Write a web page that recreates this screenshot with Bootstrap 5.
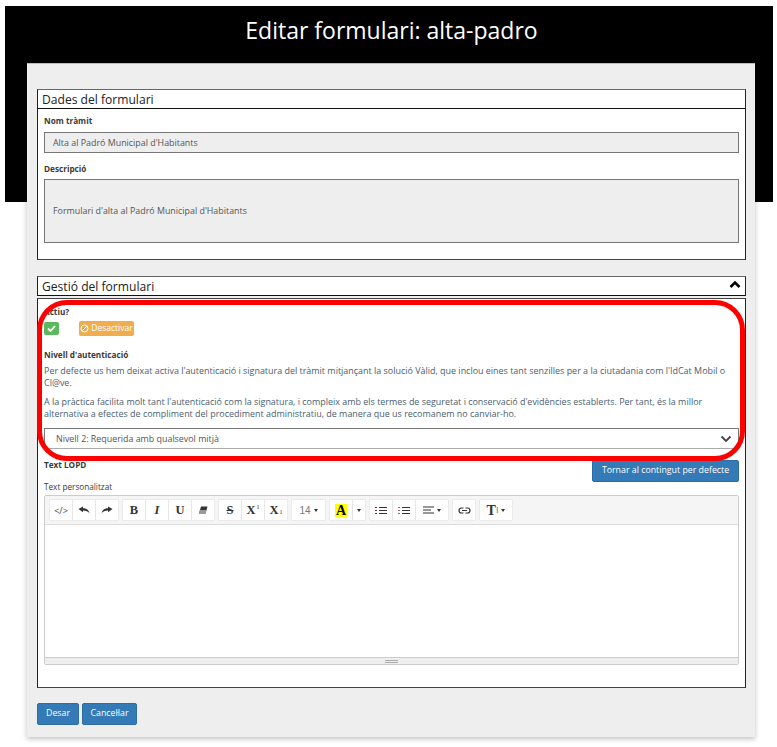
<!DOCTYPE html>
<html lang="ca">
<head>
<meta charset="utf-8">
<title>Editar formulari</title>
<link href="https://cdn.jsdelivr.net/npm/bootstrap@5.3.0/dist/css/bootstrap.min.css" rel="stylesheet">
<style>
html,body{margin:0;height:747px;overflow:hidden;background:#fff}
body{font-family:"Open Sans","Noto Sans",sans-serif;font-size:8.9px;color:#333;position:relative}
.hero{margin:6px 4px 0 5px;height:196px;background:#000;color:#fff;text-align:center;font-size:23px;line-height:48px;padding-left:5px}
.sheet{position:absolute;left:27px;top:63px;width:728px;height:674px;background:#eee;box-shadow:0 2px 5px rgba(0,0,0,.25);border-top:1px solid #bbb;padding:25px 9px 0 10px;box-sizing:border-box}
.sec-head{height:20px;background:#fff;border:1px solid #222;border-color:#666 #222 #111 #222;font-size:12.1px;line-height:19px;padding-left:4px;color:#222;position:relative}
.sec-body{background:#fff;border:1px solid #222;border-top:0;border-bottom-color:#444;padding:0 6px}
.s1{height:151px;padding-top:6px}
.s2{height:390px;margin-top:2px;border-top:1px solid #444;padding-top:7px;position:relative}
.lab{font-weight:700;font-size:8.2px;line-height:12px;color:#3a3a3a;margin:0}
.lab-gap{margin-top:10px}
.fld{background:#eee;border:1px solid #777;color:#555;padding:0 8px;display:flex;align-items:center;font-size:8.9px}
.f1{height:21px;margin-top:5px}
.f2{height:64px;margin-top:4px}
.state-row{margin-top:3px}
.tick{width:15px;height:13px;background:#5cb85c;border-radius:2px;display:flex;align-items:center;justify-content:center}
.deact{margin-left:20px;width:55px;height:15px;background:#f0ad4e;border-radius:2px;color:#fff;font-size:8.5px;display:flex;align-items:center;justify-content:center;gap:2px}
.para{margin:0;font-size:8.95px;line-height:12px;color:#4a6070}
.selbox{height:21px;border:1px solid #777;border-bottom-color:#aaa;background:#fff;margin-top:8px;padding:0 6px 0 11px;display:flex;align-items:center;justify-content:space-between;color:#555;font-size:8.9px}
.redring{position:absolute;left:37px;top:300px;width:708px;height:161px;border:5px solid #f00;border-radius:30px;pointer-events:none;box-sizing:border-box}
.btn-pad{--bs-btn-bg:#337ab7;--bs-btn-border-color:#2e6da4;--bs-btn-color:#fff;--bs-btn-hover-bg:#337ab7;--bs-btn-hover-color:#fff;--bs-btn-padding-y:0;--bs-btn-padding-x:0;--bs-btn-font-size:8.8px;--bs-btn-border-radius:2px;height:22px;display:inline-flex;align-items:center;justify-content:center}
.lopd-row{height:21px;margin-top:11px}
.lopd-txt{margin-top:-1px}
.ret{width:147px}
.ed{border:1px solid #ccc;margin-top:2px;height:170px;display:flex;flex-direction:column;border-radius:2px}
.tb{height:29px;background:#f5f5f5;border-bottom:1px solid #ddd;padding:4px 5px;display:flex;gap:5px}
.tg{display:flex;height:20px;gap:1px}
.tk{height:20px;min-width:22px;background:#fff;box-shadow:0 0 0 .5px #e2e2e2;display:flex;align-items:center;justify-content:center;color:#333;font-size:12.500px;font-family:"Liberation Serif",serif;font-weight:700;gap:3px;padding:0 3px}
.tk svg{display:block}
.tk-code{font:400 9px "Open Sans",sans-serif;color:#444}
.tk-size{min-width:33px;font:400 10px "Liberation Sans",sans-serif;color:#777}
.tk-marker{background:#ff0;color:#000;padding:0 1px;font-size:14px;line-height:13px}
.tk-narrow{min-width:12px;padding:0}
.tk-wide{min-width:32px}
.tk-t{width:32px;font-size:14px;padding:0}
.tk-tsmall{font:400 9px "Liberation Sans",sans-serif;color:#777;margin-left:-3px}
.caret-mark{width:0;height:0;border-left:2.500px solid transparent;border-right:2.500px solid transparent;border-top:3px solid #333}
.ed-area{flex:1;background:#fff}
.ed-foot{height:7px;background:#eee;border-top:1px solid #ccc;display:flex;align-items:center;justify-content:center;flex-direction:column;gap:1px}
.ed-foot i{display:block;width:13px;height:1px;background:#aaa}
.foot{margin-top:15px;display:flex;gap:3px}
.foot-a{width:42px}
.foot-b{width:55px}
.tk sup,.tk sub{font-size:6px;font-weight:400;margin-left:-2px}
.chev{right:4px;top:3px}
.mt-13{margin-top:13px}
.mt-4p{margin-top:4px}
.mt-7p{margin-top:7px}
</style>
</head>
<body>
<div class="hero">Editar formulari: alta-padro</div>
<div class="sheet">
  <div class="sec-head">Dades del formulari</div>
  <div class="sec-body s1">
    <p class="lab">Nom tràmit</p>
    <div class="fld f1">Alta al Padró Municipal d'Habitants</div>
    <p class="lab lab-gap">Descripció</p>
    <div class="fld f2">Formulari d'alta al Padró Municipal d'Habitants</div>
  </div>
  <div class="sec-head mt-3">Gestió del formulari
    <svg class="position-absolute chev" width="12" height="9" viewBox="0 0 12 9"><path d="M1.500 7 6 2.500 10.500 7" fill="none" stroke="#000" stroke-width="2.600"/></svg>
  </div>
  <div class="sec-body s2">
    <p class="lab">Actiu?</p>
    <div class="d-flex align-items-center state-row">
      <div class="tick"><svg width="9" height="7" viewBox="0 0 9 7"><path d="M1 3.500 3.500 6 8 1" fill="none" stroke="#fff" stroke-width="1.800"/></svg></div>
      <div class="deact"><svg width="9" height="9" viewBox="0 0 9 9"><circle cx="4.500" cy="4.500" r="3.500" fill="none" stroke="#fff" stroke-width="1"/><path d="M2 7 7 2" stroke="#fff" stroke-width="1"/></svg>Desactivar</div>
    </div>
    <p class="lab mt-13">Nivell d'autenticació</p>
    <p class="para mt-4p">Per defecte us hem deixat activa l'autenticació i signatura del tràmit mitjançant la solució Vàlid, que inclou eines tant senzilles per a la ciutadania com l'IdCat Mobil o Cl@ve.</p>
    <p class="para mt-7p">A la pràctica facilita molt tant l'autenticació com la signatura, i compleix amb els termes de seguretat i conservació d'evidències establerts. Per tant, és la millor alternativa a efectes de compliment del procediment administratiu, de manera que us recomanem no canviar-ho.</p>
    <div class="selbox"><span>Nivell 2: Requerida amb qualsevol mitjà</span><svg width="12" height="8" viewBox="0 0 12 8"><path d="M1.500 1.500 6 6 10.500 1.500" fill="none" stroke="#444" stroke-width="1.800"/></svg></div>
    <div class="d-flex justify-content-between align-items-start lopd-row">
      <p class="lab lopd-txt">Text LOPD</p>
      <button class="btn btn-pad ret" type="button">Tornar al contingut per defecte</button>
    </div>
    <p class="lab fw-normal">Text personalitzat</p>
    <div class="ed">
      <div class="tb">
        <div class="tg">
          <div class="tk tk-code">&lt;/&gt;</div>
          <div class="tk"><svg width="12" height="8" viewBox="0 0 12 8"><path d="M.5 3 5 .5V2.300C8.500 2.300 11 4 11.500 7.500 10 5.500 8 4.600 5 4.600V6.200Z" fill="#333"/></svg></div>
          <div class="tk"><svg width="12" height="8" viewBox="0 0 12 8"><path d="M11.500 3 7 .5V2.300C3.500 2.300 1 4 .5 7.500 2 5.500 4 4.600 7 4.600V6.200Z" fill="#333"/></svg></div>
        </div>
        <div class="tg">
          <div class="tk">B</div>
          <div class="tk fst-italic">I</div>
          <div class="tk">U</div>
          <div class="tk"><svg width="10" height="8" viewBox="0 0 10 8"><path d="M3 .5H9.500L7.500 7.500H1Z" fill="#333"/><path d="M2 4H8.500L7.500 7.500H1Z" fill="#999"/></svg></div>
        </div>
        <div class="tg">
          <div class="tk text-decoration-line-through">S</div>
          <div class="tk">X<sup>1</sup></div>
          <div class="tk">X<sub>1</sub></div>
        </div>
        <div class="tg">
          <div class="tk tk-size">14<span class="caret-mark"></span></div>
        </div>
        <div class="tg">
          <div class="tk"><span class="tk-marker">A</span></div>
          <div class="tk tk-narrow"><span class="caret-mark"></span></div>
        </div>
        <div class="tg">
          <div class="tk"><svg width="12" height="9" viewBox="0 0 12 9"><path d="M4 1.500h8M4 4.500h8M4 7.500h8" stroke="#333" stroke-width="1"/><path d="M0 1.500h2M0 4.500h2M0 7.500h2" stroke="#633" stroke-width="1"/></svg></div>
          <div class="tk"><svg width="12" height="9" viewBox="0 0 12 9"><path d="M4 1.500h8M4 4.500h8M4 7.500h8" stroke="#333" stroke-width="1"/><path d="M0 1.500h2M0 4.500h2M0 7.500h2" stroke="#a66" stroke-width="1"/></svg></div>
          <div class="tk tk-wide"><svg width="11" height="8" viewBox="0 0 11 8"><path d="M0 1h11M0 4h8M0 7h11" stroke="#333" stroke-width="1.200"/></svg><span class="caret-mark"></span></div>
        </div>
        <div class="tg">
          <div class="tk"><svg width="13" height="7" viewBox="0 0 13 7"><path d="M5.500 1H3.500a2.500 2.500 0 0 0 0 5H5.500M7.500 1H9.500a2.500 2.500 0 0 1 0 5H7.500M4 3.500H9" fill="none" stroke="#333" stroke-width="1.200"/></svg></div>
        </div>
        <div class="tg">
          <div class="tk tk-t">T<span class="tk-tsmall">I</span><span class="caret-mark"></span></div>
        </div>
      </div>
      <div class="ed-area"></div>
      <div class="ed-foot"><i></i><i></i></div>
    </div>
  </div>
  <div class="foot">
    <button class="btn btn-pad foot-a" type="button">Desar</button>
    <button class="btn btn-pad foot-b" type="button">Cancel·lar</button>
  </div>
</div>
<div class="redring"></div>
<script src="https://cdn.jsdelivr.net/npm/bootstrap@5.3.0/dist/js/bootstrap.bundle.min.js"></script>
</body>
</html>
